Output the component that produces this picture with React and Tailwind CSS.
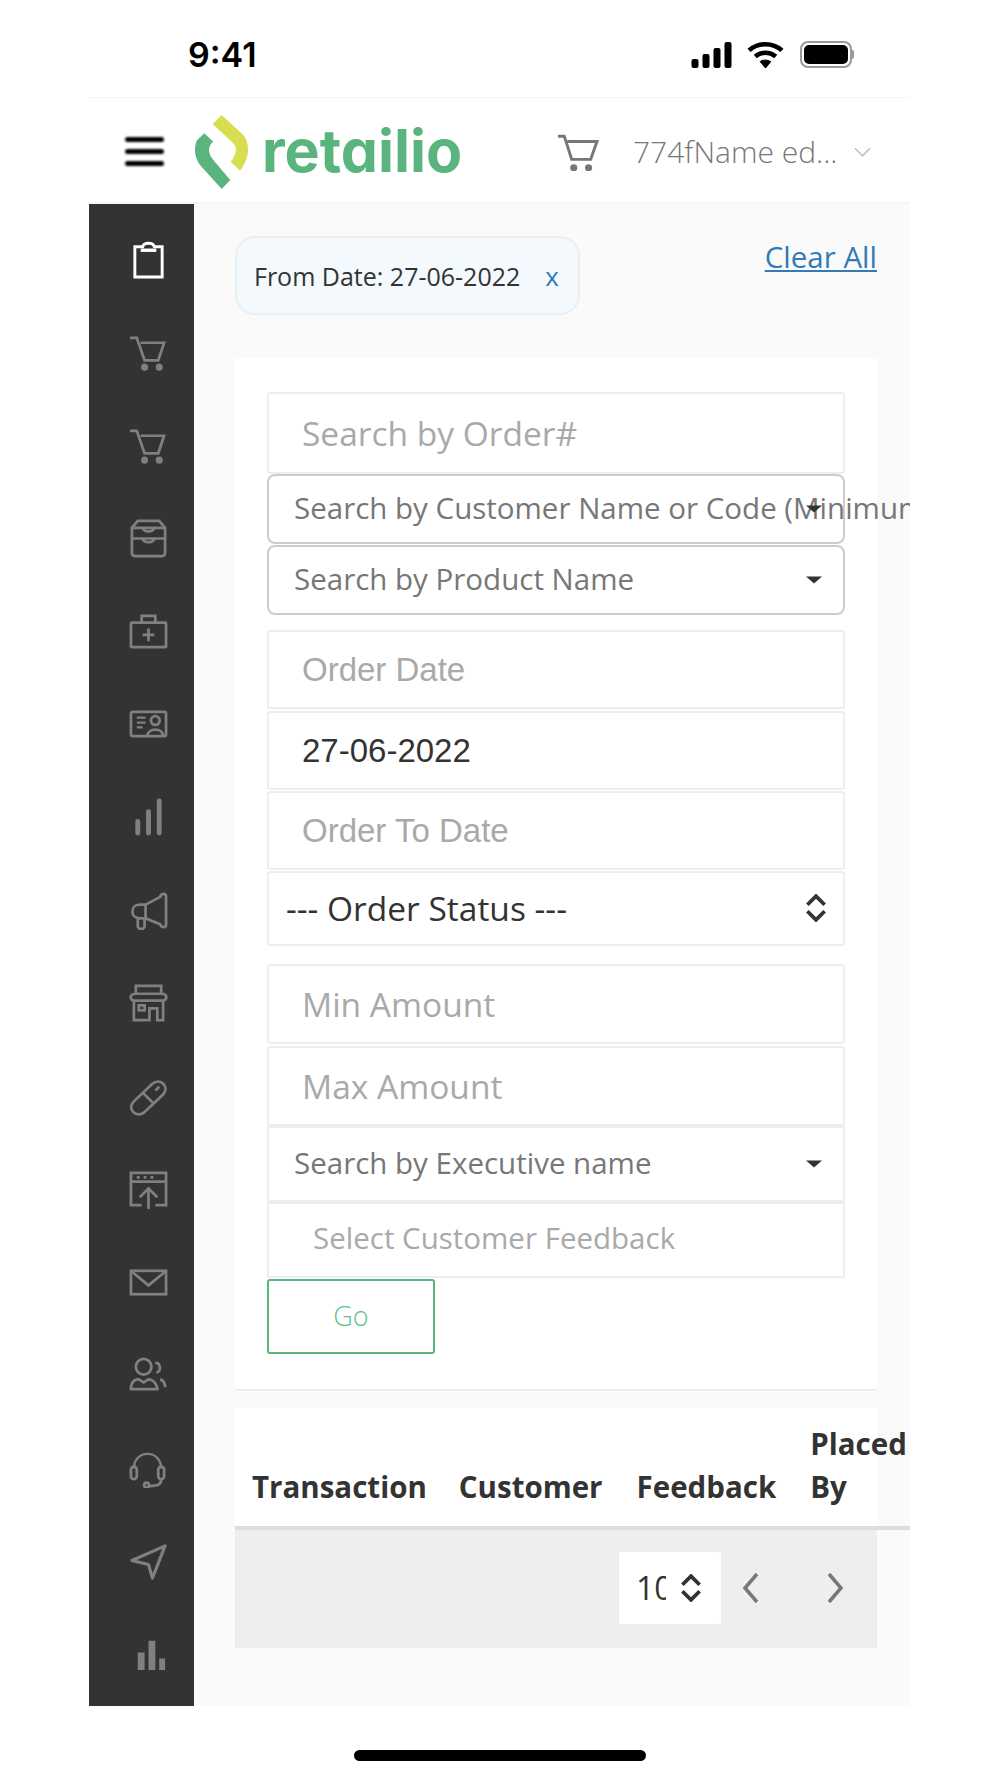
import React from "react";

const openSans = "font-['Open_Sans',sans-serif]";
const arial = "font-['Liberation_Sans',sans-serif]";

// sidebar icons, drawn in a 40x40 box
const SIDEBAR = [
  <g key="a"><path d="M6 7h8c1-5 11-5 12 0h8v31H6z" strokeWidth="3" /><path d="M12 10.500h16" strokeWidth="3.500" /></g>,
  <g key="b"><path d="M1 5h7l8 23h14l6-18H12" /><circle cx="16" cy="35" r="2.200" fill="currentColor" /><circle cx="31" cy="35" r="2.200" fill="currentColor" /></g>,
  <g key="c"><path d="M1 5h7l8 23h14l6-18H12" /><circle cx="16" cy="35" r="2.200" fill="currentColor" /><circle cx="31" cy="35" r="2.200" fill="currentColor" /></g>,
  <g key="d"><path d="M9 2h22l6 7v25c0 3-1 4-4 4H7c-3 0-4-1-4-4V9z" /><path d="M3 20h34M3 9h34M14 9c1 5 11 5 12 0M14 20c1 5 11 5 12 0" /></g>,
  <g key="e"><rect x="2" y="11" width="36" height="25" rx="1" /><path d="M13 11V4h14v7M20 17v13M14 23.500h12" /></g>,
  <g key="f"><rect x="2" y="7" width="36" height="25" rx="2" /><path d="M8 13h9M8 18h9M8 23h6" strokeWidth="2.400" /><circle cx="27" cy="16" r="4.500" /><path d="M19 32c0-9 16-9 16 0" /></g>,
  <g key="g" strokeWidth="5" strokeLinecap="round"><path d="M9 36V24M20 36V14M31 36V3" /></g>,
  <g key="h"><path d="M17 14h-6c-10 0-10 14 0 14h6zM17 14l15-8c1-4 6-4 6 0v28c0 4-5 4-6 0l-15-6zM9 28v8c0 4 7 4 7 0v-8" /></g>,
  <g key="i"><path d="M7 2h26v8H7zM7 10c-7 0-7 7 0 7h26c7 0 7-7 0-7" /><path d="M5 17v20h16V25h8v12h6V17M10 22h6v5h-6z" /></g>,
  <g key="j"><path d="M5 25L24 7c8-7 18 3 11 11L16 36C8 43-3 33 5 25zM14 16l11 11M27 14l4-4" /></g>,
  <g key="k"><path d="M13 36H2V3h36v33H27M2 12h36M8 7.500h3M15 7.500h3M22 7.500h3M20 41V19M11 28l9-9 9 9" /></g>,
  <g key="l"><rect x="2" y="8" width="36" height="24" /><path d="M3 9l17 14L37 9" /></g>,
  <g key="m"><circle cx="15" cy="11" r="8" /><path d="M2 34c0-11 8-10 8-10l5 3 5-3s8 0 9 10zM27 7c6 0 6 9 1 10M32 24c3 1 5 4 5 8" /></g>,
  <g key="n"><path d="M5 20C5 0 33 0 33 20" strokeWidth="2.400" /><rect x="2" y="18" width="6" height="13" rx="3" /><rect x="30" y="18" width="6" height="13" rx="3" /><path d="M33 31c0 6-4 7-12 7" /><circle cx="18" cy="37" r="2.500" /></g>,
  <g key="o"><path d="M3 19L37 4 24 37l-4-14z" strokeLinejoin="round" strokeWidth="3.200" /></g>,
  <g key="p" fill="currentColor" stroke="none"><path d="M9 18h7v18H9zM20 6h7v30h-7zM31 24h6v12h-6z" /></g>,
];

function CartIcon({ className }) {
  return (
    <svg viewBox="0 0 40 36" className={className} fill="none" stroke="currentColor" strokeWidth="2.800">
      <path d="M1 3h6l7 22h18l6-17H10" />
      <circle cx="16" cy="33" r="2" fill="currentColor" />
      <circle cx="30" cy="33" r="2" fill="currentColor" />
    </svg>
  );
}

function Updown({ className }) {
  return (
    <svg viewBox="0 0 20 26" className={className} fill="none" stroke="currentColor" strokeWidth="3.500">
      <path d="M2 10l8-8 8 8M2 16l8 8 8-8" />
    </svg>
  );
}

function Caret() {
  return <span className="absolute right-[21px] top-1/2 -translate-y-1/2 w-0 h-0 border-x-[8px] border-x-transparent border-t-[7px] border-t-[#333]" />;
}

function PlainInput({ label, className = "", value, font = openSans }) {
  return (
    <div className={`h-[79px] flex items-center pl-[33px] bg-white border-2 border-[#eeeeee] rounded-[3px] ${font} ${value ? "text-[#333]" : "text-[#a9a9a9]"} ${className}`}>
      {label}
    </div>
  );
}

function Select2({ label, className = "", rounded }) {
  return (
    <div className={`relative flex items-center pl-[25px] pb-[1px] bg-white border-2 whitespace-nowrap text-[29.500px] text-[#777] ${rounded ? "h-[70px] border-[#cccccc] rounded-[8px]" : "h-[76px] border-[#eeeeee]"} ${className}`}>
      {label}
      <Caret />
    </div>
  );
}

export default function App() {
  return (
    <div className={`w-[1000px] h-[1778px] bg-white overflow-hidden ${openSans}`}>
      <div className="ml-[89px] w-[821px]">
        {/* status bar */}
        <div className="h-[98px] flex items-start justify-between pt-[34px] pl-[99px] pr-[56px] border-b border-[#f4f4f4]">
          <span className="text-[34px] leading-[42px] font-semibold text-black font-['Inter',sans-serif]">9:41</span>
          <div className="flex items-center pt-[7px]">
            <svg viewBox="0 0 42 26" className="w-[43px] h-[26px]" fill="black">
              <rect x="0" y="17" width="7" height="9" rx="2" />
              <rect x="11" y="12" width="7" height="14" rx="2" />
              <rect x="22" y="6" width="7" height="20" rx="2" />
              <rect x="33" y="0" width="7" height="26" rx="2" />
            </svg>
            <svg viewBox="0 0 36 26" className="ml-[13px] w-[37px] h-[27px]" fill="none" stroke="black" strokeWidth="4.500">
              <path d="M2 9c9-8 23-8 32 0M8 15c6-5 14-5 20 0" />
              <path d="M13 20c3-2 7-2 10 0l-5 6z" fill="black" strokeWidth="1" />
            </svg>
            <div className="ml-[16px] flex items-center">
              <div className="w-[52px] h-[27px] rounded-[8px] border-2 border-[#999] p-[2px]">
                <div className="w-full h-full bg-black rounded-[5px]" />
              </div>
              <div className="w-[2px] h-[9px] bg-[#999] rounded-r" />
            </div>
          </div>
        </div>

        {/* header */}
        <div className="h-[106px] pt-[3px] flex items-center border-b-2 border-[#f4f4f4] relative">
          <div className="ml-[36px] w-[39px] flex flex-col gap-[7px] blur-[1px]">
            <div className="h-[5px] bg-black rounded" />
            <div className="h-[5px] bg-black rounded" />
            <div className="h-[5px] bg-black rounded" />
          </div>
          <svg viewBox="0 0 53 74" className="ml-[31px] w-[53px] h-[74px]">
            <path d="M26.700 0L17.700 9L36.700 26.700C40 30 41 32 41 35C41 38 39 43 35.700 46.700L45 55.700C50 49 53 42 53 35C53 29 52 25 48.300 20Z" fill="#d7de4f" />
            <path d="M9.300 18.300L18.300 26.700C15 29 14 32 14 35C14 39 16 42 18.300 45L35.300 65L26.700 74L5 50C2 46 0 41 0 35C0 31 1 27 2.300 25Z" fill="#5ab47e" />
          </svg>
          <span className="ml-[14px] w-[201px] text-[59px] leading-none font-bold text-[#5ab47e] font-['Inter',sans-serif] [font-feature-settings:'cv11'] -mt-[3px]">retailio</span>
          <CartIcon className="ml-[93px] w-[44px] h-[38px] text-[#777]" />
          <span className="ml-[33px] text-[30px] font-light text-[#777] whitespace-nowrap">774fName ed...</span>
          <svg viewBox="0 0 18 10" className="ml-[17px] w-[17px] h-[10px] text-[#bbb]" fill="none" stroke="currentColor" strokeWidth="1.500"><path d="M1 1l8 8 8-8" /></svg>
        </div>

        <div className="flex h-[1502px]">
          {/* sidebar */}
          <div className="w-[105px] bg-[#333333] pt-[9px] pl-[14px] flex flex-col shrink-0">
            {SIDEBAR.map((icon, i) => (
              <div key={i} className="h-[93px] flex items-center justify-center shrink-0">
                <svg viewBox="0 0 40 40" className={`w-[39px] h-[39px] ${i === 0 ? "text-white" : "text-[#808080]"}`} fill="none" stroke="currentColor" strokeWidth="2.800">
                  {icon}
                </svg>
              </div>
            ))}
          </div>

          {/* main */}
          <div className="flex-1 bg-[#fafafa] pl-[41px] overflow-hidden">
            <div className="w-[642px] h-[154px] pt-[32px] flex justify-between items-start">
              <div className="w-[345px] h-[79px] flex items-center pl-[17px] bg-[#f3f9fd] border-2 border-[#e9f0f4] rounded-[20px] text-[25px] text-[#333] whitespace-nowrap">
                <span className="mt-[3px]">From Date: 27-06-2022</span>
                <span className="ml-[25px] mt-[2px] text-[#337ab7] text-[26px]">x</span>
              </div>
              <a className="text-[29.500px] leading-[32px] mt-[5px] text-[#337ab7] underline">Clear All</a>
            </div>

            {/* filter card */}
            <div className="w-[642px] h-[1033px] bg-white border-b-2 border-[#eeeeee] pt-[34px] pl-[32px] pr-[32px]">
              <div className="flex flex-col text-[33.500px]">
                <PlainInput label="Search by Order#" className="h-[82px]" />
                <Select2 label="Search by Customer Name or Code (Minimum 3 characters)" rounded />
                <Select2 label="Search by Product Name" rounded className="mt-[1px]" />
                <PlainInput label="Order Date" font={arial} className="mt-[15px] text-[33px]" />
                <PlainInput label="27-06-2022" value font={arial} className="mt-[2px] text-[33px]" />
                <PlainInput label="Order To Date" font={arial} className="mt-[1px] text-[33px]" />
                <div className="relative h-[75px] mt-[1px] flex items-center pl-[17px] border-2 border-[#eeeeee] rounded-[3px] text-[33.500px] text-[#333]">
                  --- Order Status ---
                  <Updown className="absolute right-[16px] top-[21px] w-[22px] h-[28px] text-[#333]" />
                </div>
                <PlainInput label="Min Amount" className="mt-[18px] h-[80px]" />
                <PlainInput label="Max Amount" className="mt-[2px] h-[80px]" />
                <Select2 label="Search by Executive name" />
                <div className="h-[76px] flex items-center pl-[44px] pb-[3px] border-2 border-[#eeeeee] text-[29.500px] text-[#a9a9a9]">Select Customer Feedback</div>
                <div className="mt-[1px] w-[168px] h-[75px] flex items-center justify-center border-2 border-[#5ab47e] rounded-[3px] text-[27px] font-light text-[#5cc48a]">Go</div>
              </div>
            </div>

            {/* table */}
            <div className="mt-[17px] w-[675px] h-[122px] border-b-4 border-[#dddddd] relative">
              <div className="absolute inset-y-0 left-0 w-[642px] bg-white" />
              <div className="relative h-full flex items-end pb-[18px] text-[29.500px] leading-[43px] font-bold text-[#333]">
                <span className="ml-[17px]">Transaction</span>
                <span className="ml-[32px]">Customer</span>
                <span className="ml-[34px]">Feedback</span>
                <span className="ml-[34px] w-[100px]">Placed By</span>
              </div>
            </div>
            <div className="w-[642px] h-[118px] pb-[2px] bg-[#eeeeee] flex items-center justify-end pr-[33px]">
              <div className="w-[102px] h-[72px] bg-white rounded-[3px] flex items-center pl-[17px] text-[32px] text-[#333] mr-[21px]">
                <span className="w-[30px] overflow-hidden">10</span>
                <Updown className="ml-[14px] w-[22px] h-[28px] text-[#333]" />
              </div>
              <svg viewBox="0 0 18 32" className="w-[18px] h-[32px] text-[#777]" fill="none" stroke="currentColor" strokeWidth="3.500"><path d="M15 2L3 16l12 14" /></svg>
              <svg viewBox="0 0 18 32" className="ml-[66px] w-[18px] h-[32px] text-[#777]" fill="none" stroke="currentColor" strokeWidth="3.500"><path d="M3 2l12 14L3 30" /></svg>
            </div>
          </div>
        </div>
      </div>

      {/* home indicator */}
      <div className="mt-[44px] ml-[354px] w-[292px] h-[11px] bg-black rounded-full" />
    </div>
  );
}
